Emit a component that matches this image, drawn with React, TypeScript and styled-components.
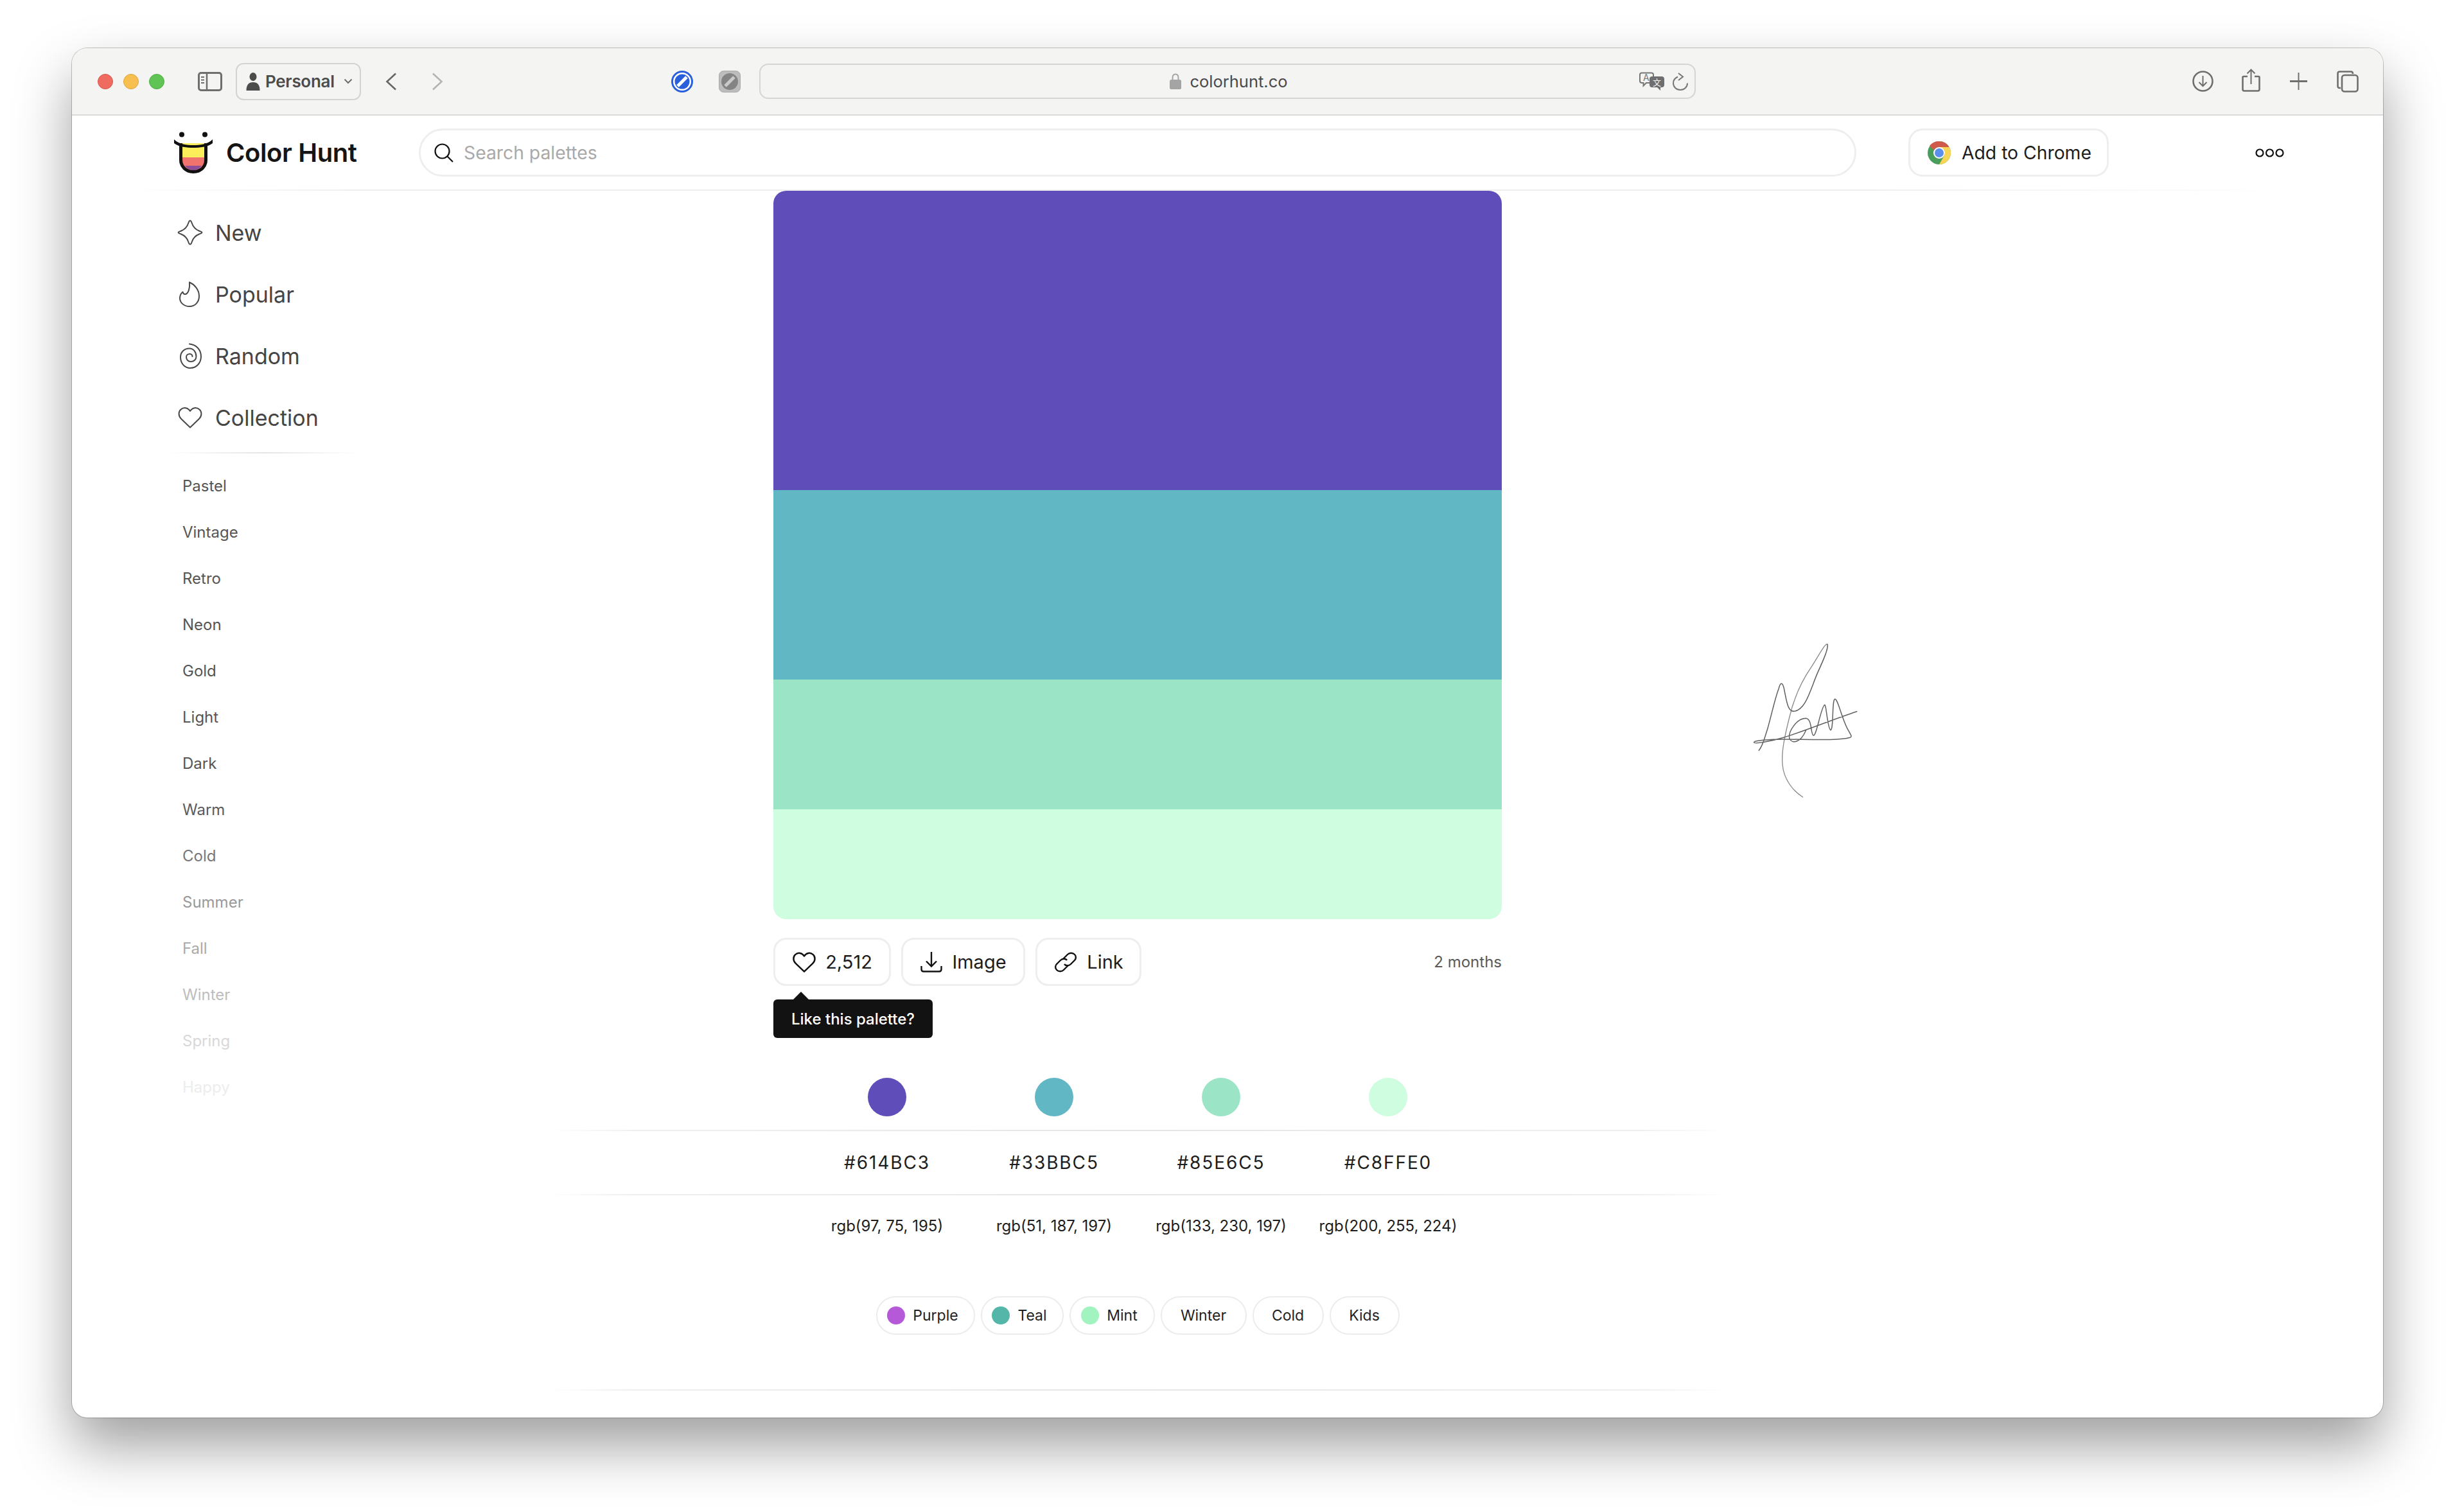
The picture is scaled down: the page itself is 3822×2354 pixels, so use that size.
import React from 'react';
import styled, { createGlobalStyle } from 'styled-components';

const Global = createGlobalStyle`
  html, body { margin: 0; padding: 0; background: #fff; }
  body { font-family: Inter, "Liberation Sans", sans-serif; -webkit-font-smoothing: antialiased; }
`;

const Desk = styled.div`
  width: 3822px;
  height: 2354px;
  padding: 75px 112px 0;
  box-sizing: border-box;
  overflow: hidden;
  background: #fff;
`;

const Win = styled.div`
  width: 3598px;
  height: 2132px;
  border-radius: 24px;
  overflow: hidden;
  background: #fff;
  box-shadow: 0 0 0 1px rgba(0, 0, 0, 0.22), 0 44px 88px rgba(0, 0, 0, 0.38);
`;

const Toolbar = styled.div`
  height: 105px;
  box-sizing: border-box;
  background: #f4f4f2;
  border-bottom: 2px solid #d9d9d7;
  display: flex;
  align-items: center;
  padding-left: 40px;
`;

const Lights = styled.div`
  display: flex;
  gap: 16px;
  margin-right: 52px;
`;

const Light = styled.span<{ $c: string; $b: string }>`
  width: 24px;
  height: 24px;
  box-sizing: border-box;
  border-radius: 50%;
  background: ${p => p.$c};
  border: 1px solid ${p => p.$b};
`;

const ChromeIcon = styled.svg<{ $ml?: number }>`
  display: block;
  flex: none;
  margin-left: ${p => p.$ml ?? 0}px;
`;

const ProfileBtn = styled.div`
  width: 195px;
  height: 58px;
  margin-left: 21px;
  box-sizing: border-box;
  border: 2px solid #d3d3d1;
  border-radius: 12px;
  display: flex;
  align-items: center;
  padding-left: 14px;
  gap: 8px;
  font-size: 26px;
  font-weight: 600;
  color: #4c4c4c;
  letter-spacing: -0.3px;
`;

const Caret = styled.svg`
  flex: none;
  margin-left: 6px;
`;

const UrlBar = styled.div`
  width: 1458px;
  height: 55px;
  margin-left: 29px;
  padding-left: 4px;
  box-sizing: border-box;
  border: 2px solid #d5d5d3;
  border-radius: 14px;
  position: relative;
  display: flex;
  align-items: center;
  justify-content: center;
  gap: 13px;
  font-size: 25.5px;
  color: #4a4a4a;
`;

const UrlTools = styled.div`
  position: absolute;
  right: 10px;
  top: 0;
  bottom: 0;
  display: flex;
  align-items: center;
  gap: 13px;
`;

const RightTools = styled.div`
  margin-left: auto;
  display: flex;
  align-items: center;
  gap: 44px;
  padding-right: 38px;
`;

const Header = styled.div`
  height: 115px;
  display: flex;
  align-items: center;
  padding-left: 157px;
`;

const HeaderRule = styled.div`
  height: 2px;
  margin: 0 110px 0 60px;
  background: linear-gradient(90deg, rgba(238, 238, 238, 0), #eeeeee 12%, #eeeeee 78%, rgba(238, 238, 238, 0));
`;

const Brand = styled.div`
  display: flex;
  align-items: center;
  gap: 19px;
  width: 383px;
  font-size: 40px;
  font-weight: 600;
  color: #151515;
  letter-spacing: -0.4px;
`;

const Search = styled.div`
  width: 2238px;
  height: 75px;
  box-sizing: border-box;
  border: 3px solid #eeeeee;
  border-radius: 38px;
  display: flex;
  align-items: center;
  padding-left: 21px;
  gap: 16px;
  font-size: 28.3px;
  color: #a9a9a9;
`;

const AddChrome = styled.div`
  width: 312px;
  height: 75px;
  margin-left: 81px;
  box-sizing: border-box;
  border: 3px solid #eeeeee;
  border-radius: 22px;
  display: flex;
  align-items: center;
  padding-left: 27px;
  gap: 17px;
  font-size: 28.3px;
  color: #1d1d1d;
`;

const Dots = styled.svg`
  display: block;
  margin-left: 228px;
`;

const Body = styled.div`
  display: flex;
`;

const Sidebar = styled.nav`
  width: 1092px;
  box-sizing: border-box;
  flex: none;
  padding: 17px 0 0 148px;
`;

const NavItem = styled.div`
  height: 96px;
  display: flex;
  align-items: center;
  gap: 19px;
  padding-left: 16px;
  font-size: 34px;
  color: #454545;
`;

const NavIcon = styled.svg`
  display: block;
  flex: none;
  fill: none;
  stroke: #484848;
  stroke-width: 2;
`;

const SideRule = styled.div`
  width: 300px;
  height: 2px;
  margin: 6px 0 15px;
  background: linear-gradient(90deg, rgba(226, 226, 226, 0), #e4e4e4 50%, rgba(226, 226, 226, 0));
`;

const TagLink = styled.div<{ $c: string }>`
  height: 72px;
  line-height: 72px;
  padding-left: 24px;
  font-size: 24px;
  color: ${p => p.$c};
`;

const Center = styled.main`
  width: 1134px;
  flex: none;
`;

const Palette = styled.div`
  height: 1134px;
  border-radius: 20px;
  overflow: hidden;
  display: flex;
  flex-direction: column;
`;

const Stripe = styled.div<{ $c: string; $h: number }>`
  height: ${p => p.$h}px;
  background: ${p => p.$c};
`;

const Actions = styled.div`
  margin-top: 29px;
  height: 75px;
  display: flex;
  align-items: center;
  gap: 16px;
`;

const ActionBtn = styled.div<{ $w: number }>`
  width: ${p => p.$w}px;
  height: 75px;
  box-sizing: border-box;
  border: 3px solid #eeeeee;
  border-radius: 20px;
  display: flex;
  align-items: center;
  justify-content: center;
  gap: 14px;
  font-size: 29px;
  color: #1c1c1c;
  position: relative;
`;

const Tip = styled.div`
  position: absolute;
  left: -3px;
  top: 93px;
  width: 248px;
  height: 60px;
  border-radius: 6px;
  background: #121212;
  color: #fff;
  font-size: 24px;
  font-weight: 500;
  display: flex;
  align-items: center;
  justify-content: center;
  &::before {
    content: '';
    position: absolute;
    left: 30px;
    top: -12px;
    border-left: 13px solid transparent;
    border-right: 13px solid transparent;
    border-bottom: 13px solid #121212;
  }
`;

const Ago = styled.div`
  margin-left: auto;
  font-size: 24px;
  color: #5a5a5a;
`;

const Grid4 = styled.div<{ $h: number }>`
  display: grid;
  grid-template-columns: repeat(4, 260px);
  justify-content: center;
  justify-items: center;
  align-items: center;
  height: ${p => p.$h}px;
`;

const DotsRow = styled(Grid4)`
  margin-top: 143px;
  align-items: start;
`;

const Swatch = styled.div<{ $c: string }>`
  width: 60px;
  height: 60px;
  border-radius: 50%;
  background: ${p => p.$c};
`;

const Rule = styled.div`
  height: 2px;
  margin: 0 -354px;
  background: linear-gradient(90deg, rgba(232, 232, 232, 0), #eeeeee 8%, #e6e6e6 50%, #eeeeee 92%, rgba(232, 232, 232, 0));
`;

const Hex = styled.div`
  font-size: 28px;
  letter-spacing: 1.9px;
  color: #1d1d1d;
`;

const Rgb = styled.div`
  font-size: 24px;
  color: #1d1d1d;
  white-space: nowrap;
`;

const Tags = styled.div`
  margin: 63px 0 85px;
  display: flex;
  justify-content: center;
  gap: 9px;
`;

const Tag = styled.div<{ $w: number; $dotted: boolean }>`
  width: ${p => p.$w}px;
  height: 60px;
  box-sizing: border-box;
  border: 2px solid #ececec;
  border-radius: 30px;
  padding-right: ${p => (p.$dotted ? 8 : 0)}px;
  display: flex;
  align-items: center;
  justify-content: center;
  gap: 12px;
  font-size: 23px;
  color: #1f1f1f;
`;

const TagDot = styled.span<{ $c: string }>`
  width: 28px;
  height: 28px;
  border-radius: 50%;
  background: ${p => p.$c};
`;

const Aside = styled.aside`
  padding: 663px 0 0 342px;
`;

const heart = 'M20 35.5 L6 22 C1.5 17.5 1.5 11 5.5 7.5 C10 3.5 16.5 4.5 20 10 C23.5 4.5 30 3.5 34.5 7.5 C38.5 11 38.5 17.5 34 22 Z';

const Logo = () => (
  <svg width="64" height="65" viewBox="0 0 64 65" style={{ display: 'block', flex: 'none' }}>
    <circle cx="14" cy="4.5" r="4" fill="#111" />
    <circle cx="50" cy="4.5" r="4" fill="#111" />
    <path d="M12.5 18 H51.5 V44 C51.5 54 44 60 32 60 C20 60 12.5 54 12.5 44 Z" fill="#fbee5a" />
    <path d="M12.5 40 H51.5 V44 C51.5 54 44 60 32 60 C20 60 12.5 54 12.5 44 Z" fill="#f0736e" />
    <path d="M19 53 H45 C41 58 37 60 32 60 C27 60 23 58 19 53 Z" fill="#8e4e97" />
    <path d="M12.5 18 V44 C12.5 54 20 62.5 32 62.5 C44 62.5 51.5 54 51.5 44 V18" fill="none" stroke="#111" strokeWidth="5" />
    <path d="M2 12 C10 20 22 21 32 21 C42 21 54 20 62 12 L62 18 C54 24 42 25 32 25 C22 25 10 24 2 18 Z" fill="#111" />
  </svg>
);

const ChromeLogo = () => (
  <svg width="36" height="36" viewBox="0 0 36 36" style={{ display: 'block', flex: 'none' }}>
    <circle cx="18" cy="18" r="18" fill="#4a9e5c" />
    <path d="M18 0 A18 18 0 0 1 33.6 9 L18 9 A9 9 0 0 0 10 14 L3 7 A18 18 0 0 1 18 0 Z" fill="#cf5a49" />
    <path d="M33.6 9 A18 18 0 0 1 18 36 L25.8 22.5 A9 9 0 0 0 25.8 13.5 L18 9 Z" fill="#f6d557" />
    <circle cx="18" cy="18" r="9" fill="#fff" />
    <circle cx="18" cy="18" r="7" fill="#5a8ff0" />
  </svg>
);

const navItems = [
  { label: 'New', d: 'M20 1.5 C21.5 1.5 22 3 23 6 C25 12 28 15 34 17.5 C37 18.7 38.5 19 38.5 20 C38.5 21 37 21.3 34 22.5 C28 25 25 28 23 34 C22 37 21.5 38.5 20 38.5 C18.5 38.5 18 37 17 34 C15 28 12 25 6 22.5 C3 21.3 1.5 21 1.5 20 C1.5 19 3 18.7 6 17.5 C12 15 15 12 17 6 C18 3 18.5 1.5 20 1.5 Z' },
  { label: 'Popular', d: 'M19 1.5 C27 5 34 13 34 23 C34 32 28 39 19 39 C10 39 4 33 4 26 C4 22 5.5 19 8.5 16.5 C9 19 11 20.5 13 20 C17 19 20 11 19 1.5 Z' },
  { label: 'Random', d: 'M19 1.5 C29 2.5 37 10 37 21 C37 31 30 39 20 39 C11 39 5 31 5 22 C5 14 11 8.5 19 8.5 C25 8.5 29.5 14 29.5 21 C29.5 26 25.5 29 21 29 C17 29 14 26 14 22 C14 19 16.5 17 19.5 17 C22 17 23.5 19 23.5 21' },
  { label: 'Collection', d: heart },
];

const moods: [string, string][] = [
  ['Pastel', '#555'], ['Vintage', '#555'], ['Retro', '#555'], ['Neon', '#555'], ['Gold', '#555'],
  ['Light', '#555'], ['Dark', '#555'], ['Warm', '#5c5c5c'], ['Cold', '#777'], ['Summer', '#999'],
  ['Fall', '#aaa'], ['Winter', '#bdbdbd'], ['Spring', '#d8d8d8'], ['Happy', '#ededed'],
];

const colors = [
  { view: '#5f4db9', hex: '#614BC3', rgb: 'rgb(97, 75, 195)', h: 466 },
  { view: '#62b7c5', hex: '#33BBC5', rgb: 'rgb(51, 187, 197)', h: 295 },
  { view: '#9be5c6', hex: '#85E6C5', rgb: 'rgb(133, 230, 197)', h: 202 },
  { view: '#cffde0', hex: '#C8FFE0', rgb: 'rgb(200, 255, 224)', h: 171 },
];

const tags = [
  { label: 'Purple', dot: '#b659d8', w: 154 },
  { label: 'Teal', dot: '#54b6a8', w: 129 },
  { label: 'Mint', dot: '#a1f3bf', w: 133 },
  { label: 'Winter', w: 134 },
  { label: 'Cold', w: 111 },
  { label: 'Kids', w: 109 },
];

export default function App() {
  return (
    <Desk>
      <Global />
      <Win>
        <Toolbar>
          <Lights>
            <Light $c="#ef6b60" $b="#d9574d" />
            <Light $c="#f6bf50" $b="#dfa63b" />
            <Light $c="#5fc454" $b="#4fae45" />
          </Lights>
          <ChromeIcon width="38" height="30" viewBox="0 0 38 30" fill="none" stroke="#6e6e6e">
            <rect x="1.5" y="1.5" width="35" height="27" rx="3.5" strokeWidth="3" />
            <path d="M14 2 V28" strokeWidth="2.5" />
            <path d="M5 8 H10 M5 12.5 H10 M5 17 H10" strokeWidth="2" />
          </ChromeIcon>
          <ProfileBtn>
            <svg width="22" height="30" viewBox="0 0 22 30" style={{ flex: 'none' }}>
              <ellipse cx="11" cy="7.5" rx="5.5" ry="6.5" fill="#4c4c4c" />
              <path d="M0.5 29 C0.5 20 4 16 11 16 C18 16 21.5 20 21.5 29 Z" fill="#4c4c4c" />
            </svg>
            Personal
            <Caret width="14" height="9" viewBox="0 0 14 9">
              <path d="M1.5 1.5 L7 7 L12.5 1.5" fill="none" stroke="#6e6e6e" strokeWidth="2" />
            </Caret>
          </ProfileBtn>
          <ChromeIcon $ml={38} width="18" height="28" viewBox="0 0 18 28" fill="none" stroke="#666" strokeWidth="2.6">
            <path d="M16 1.5 L2.5 14 L16 26.5" />
          </ChromeIcon>
          <ChromeIcon $ml={54} width="18" height="28" viewBox="0 0 18 28" fill="none" stroke="#b4b4b4" strokeWidth="2.6">
            <path d="M2 1.5 L15.5 14 L2 26.5" />
          </ChromeIcon>
          <ChromeIcon $ml={355} width="34" height="34" viewBox="0 0 34 34">
            <circle cx="17" cy="17" r="15.5" fill="#fff" stroke="#2a5fdc" strokeWidth="3" />
            <circle cx="17" cy="17" r="11.5" fill="#2a5fdc" />
            <path d="M10 24 L24 10" stroke="#fff" strokeWidth="5" />
          </ChromeIcon>
          <ChromeIcon $ml={40} width="34" height="34" viewBox="0 0 34 34">
            <rect x="0.5" y="0.5" width="33" height="33" rx="7" fill="#bdbdbd" stroke="#a8a8a8" />
            <circle cx="17" cy="17" r="13" fill="#848484" />
            <path d="M10 24 L24 10" stroke="#c9c9c9" strokeWidth="5" />
          </ChromeIcon>
          <UrlBar>
            <svg width="18" height="25" viewBox="0 0 18 25">
              <path d="M4.5 12 V7 C4.5 3.5 6.5 1.5 9 1.5 C11.5 1.5 13.5 3.5 13.5 7 V12" fill="none" stroke="#a4a4a4" strokeWidth="2" />
              <rect x="0" y="10" width="18" height="15" rx="2.5" fill="#a4a4a4" />
            </svg>
            colorhunt.co
            <UrlTools>
              <svg width="39" height="29" viewBox="0 0 39 29">
                <path d="M4 1.500 H19 C21 1.500 22 2.500 22 4.500 V14 C22 16 21 17 19 17 H11 L6.500 21.500 V17 H4 C2 17 1 16 1 14 V4.500 C1 2.500 2 1.500 4 1.500 Z" fill="none" stroke="#777" strokeWidth="2" />
                <text x="6" y="14" fontSize="14" fontFamily="Inter, sans-serif" fill="#777">A</text>
                <path d="M20 7 H35 C37.500 7 39 8.500 39 11 V20 C39 22.500 37.500 24 35 24 H33 V29 L28 24 H20 C17.500 24 16 22.500 16 20 V11 C16 8.500 17.500 7 20 7 Z" fill="#6e6e6e" />
                <text x="21" y="21" fontSize="13" fontFamily="'Noto Sans CJK SC', sans-serif" fill="#f4f4f2">文</text>
              </svg>
              <svg width="24" height="28" viewBox="0 0 24 28" fill="none" stroke="#777" strokeWidth="2">
                <path d="M8 6.500 C3.500 8.500 1 12 1 16.500 C1 22.500 6 27 12 27 C18 27 23 22.500 23 16.500" />
                <path d="M9 1 L16 6.500 L9 12" strokeWidth="2" />
              </svg>
            </UrlTools>
          </UrlBar>
          <RightTools>
            <svg width="33" height="33" viewBox="0 0 33 33" fill="none" stroke="#6e6e6e">
              <circle cx="16.5" cy="16.5" r="15" strokeWidth="2.6" />
              <path d="M16.5 8 V24 M10.500 18 L16.5 24 L22.500 18" strokeWidth="2" />
            </svg>
            <svg width="29" height="36" viewBox="0 0 29 36" fill="none" stroke="#6e6e6e" style={{ marginTop: -3 }}>
              <path d="M9 12 H3 C2 12 1.500 12.500 1.500 13.500 V32 C1.500 33.500 2.500 34.500 4 34.500 H25 C26.500 34.500 27.500 33.500 27.500 32 V13.500 C27.500 12.500 27 12 26 12 H20" strokeWidth="2.6" />
              <path d="M14.500 24 V2 M8.500 7.500 L14.500 1.500 L20.500 7.500" strokeWidth="2" />
            </svg>
            <svg width="27" height="27" viewBox="0 0 27 27" fill="none" stroke="#6e6e6e" style={{ margin: '0 2px' }}>
              <path d="M13.500 0 V27" strokeWidth="2" />
              <path d="M0 13.500 H27" strokeWidth="3" />
            </svg>
            <svg width="34" height="34" viewBox="0 0 34 34" fill="none" stroke="#6e6e6e" strokeWidth="2.600">
              <path d="M6 27 H4.500 C2.500 27 1.500 26 1.500 24 V4.500 C1.500 2.500 2.500 1.500 4.500 1.500 H22 C24 1.500 25 2.500 25 5" />
              <rect x="8" y="7" width="24.500" height="25.500" rx="4" />
            </svg>
          </RightTools>
        </Toolbar>
        <Header>
          <Brand>
            <Logo />
            Color Hunt
          </Brand>
          <Search>
            <svg width="30" height="30" viewBox="0 0 30 30" fill="none" stroke="#111" strokeWidth="2.200" style={{ flex: 'none' }}>
              <circle cx="12.500" cy="12.500" r="11" />
              <path d="M20.500 20.500 L29 29" />
            </svg>
            Search palettes
          </Search>
          <AddChrome>
            <ChromeLogo />
            Add to Chrome
          </AddChrome>
          <Dots width="45" height="14" viewBox="0 0 45 14" fill="none" stroke="#111" strokeWidth="2.200">
            <circle cx="7" cy="7" r="5.500" />
            <circle cx="22.500" cy="7" r="5.500" />
            <circle cx="38" cy="7" r="5.500" />
          </Dots>
        </Header>
        <HeaderRule />
        <Body>
          <Sidebar>
            {navItems.map(n => (
              <NavItem key={n.label}>
                <NavIcon width="40" height="40" viewBox="0 0 40 40">
                  <path d={n.d} strokeLinejoin="round" strokeLinecap="round" />
                </NavIcon>
                {n.label}
              </NavItem>
            ))}
            <SideRule />
            {moods.map(([m, c]) => (
              <TagLink key={m} $c={c}>{m}</TagLink>
            ))}
          </Sidebar>
          <Center>
            <Palette>
              {colors.map(c => (
                <Stripe key={c.hex} $c={c.view} $h={c.h} />
              ))}
            </Palette>
            <Actions>
              <ActionBtn $w={183}>
                <svg width="38" height="38" viewBox="0 0 40 40" fill="none" stroke="#111" strokeWidth="2.600" strokeLinejoin="round">
                  <path d={heart} />
                </svg>
                2,512
                <Tip>Like this palette?</Tip>
              </ActionBtn>
              <ActionBtn $w={193}>
                <svg width="36" height="34" viewBox="0 0 34 34" fill="none" stroke="#111" strokeWidth="2.400">
                  <path d="M17 1 V23 M9 15.500 L17 23.500 L25 15.500" />
                  <path d="M1.500 23 V28 C1.500 30.500 2.500 31.500 5 31.500 H29 C31.500 31.500 32.500 30.500 32.500 28 V23" />
                </svg>
                Image
              </ActionBtn>
              <ActionBtn $w={165}>
                <svg width="38" height="36" viewBox="0 0 36 36" fill="none" stroke="#111" strokeWidth="2.400" strokeLinejoin="round">
                  <path d="M14 13 L21 6 C24 3 29 3 32 6 C35 9 34 13 32 15 L26 21 C23 24 18 24 16 21" />
                  <path d="M22 23 L15 30 C12 33 7 33 4 30 C1 27 2 23 4 21 L10 15 C13 12 18 12 20 15" />
                </svg>
                Link
              </ActionBtn>
              <Ago>2 months</Ago>
            </Actions>
            <DotsRow $h={81}>
              {colors.map(c => <Swatch key={c.hex} $c={c.view} />)}
            </DotsRow>
            <Rule />
            <Grid4 $h={98}>
              {colors.map(c => <Hex key={c.hex}>{c.hex}</Hex>)}
            </Grid4>
            <Rule />
            <Grid4 $h={94}>
              {colors.map(c => <Rgb key={c.hex}>{c.rgb}</Rgb>)}
            </Grid4>
            <Tags>
              {tags.map(t => (
                <Tag key={t.label} $w={t.w} $dotted={!!t.dot}>
                  {t.dot && <TagDot $c={t.dot} />}
                  {t.label}
                </Tag>
              ))}
            </Tags>
            <Rule />
          </Center>
          <Aside>
            <svg width="260" height="300" viewBox="0 0 780 900" fill="none" strokeLinecap="round" strokeLinejoin="round" style={{ display: 'block' }}>
              <path d="M495 130 C485 120 450 190 420 235 C375 300 335 390 315 480 C295 560 280 630 285 690 C290 760 335 815 380 843" stroke="#8a8a8a" strokeWidth="4" />
              <path d="M175 625 C195 600 200 570 215 525 C235 455 250 380 268 335 C275 305 285 305 292 335 C305 400 310 445 340 442 C395 435 415 340 450 260 C475 205 500 150 495 130" stroke="#5e5e5e" strokeWidth="4.500" />
              <path d="M632 443 C520 480 400 530 290 565 C230 583 155 595 152 588 C150 578 220 573 300 573 C400 573 550 580 600 565 C612 560 605 555 595 535 C565 490 545 385 530 385 C515 390 525 525 510 530 C495 525 490 410 482 412 C465 420 445 555 430 555 C415 550 425 480 395 475 C350 475 310 540 318 570 C330 595 370 590 395 530" stroke="#626262" strokeWidth="4.500" />
            </svg>
          </Aside>
        </Body>
      </Win>
    </Desk>
  );
}
